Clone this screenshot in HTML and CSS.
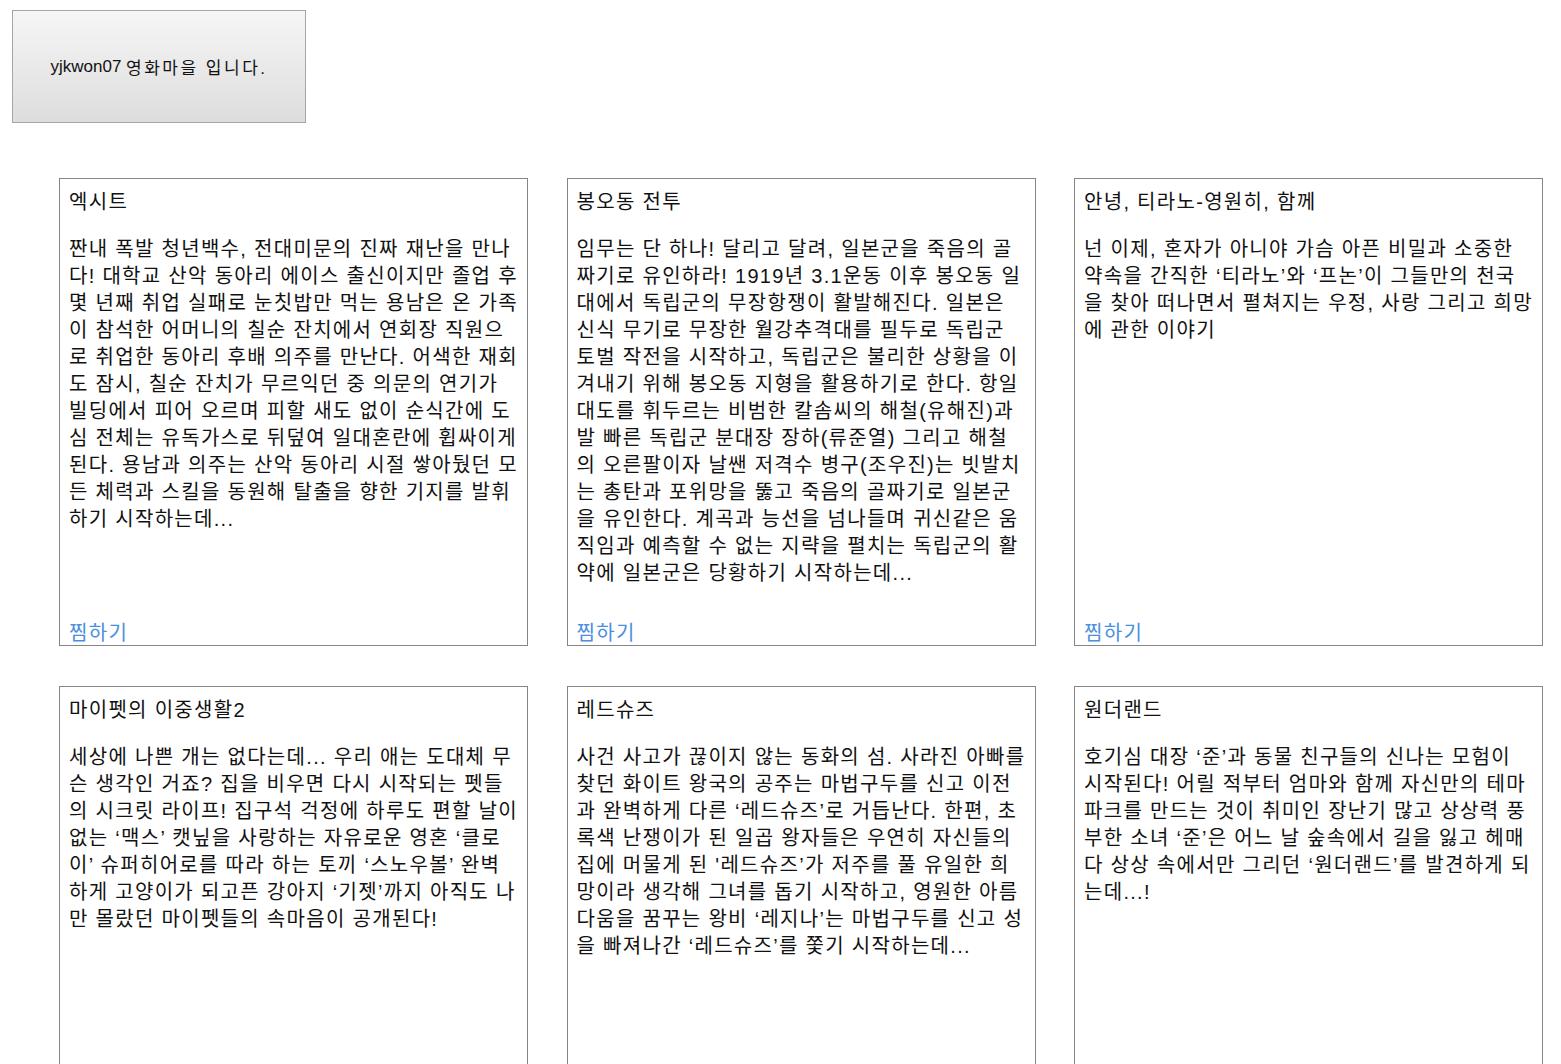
FILE: index.html
```html
<!DOCTYPE html>
<html lang="ko">
<head>
<meta charset="utf-8">
<title>yjkwon07 영화마을</title>
<link rel="stylesheet" href="styles.css">
</head>
<body>
<header class="site-header">
  <div class="brand">yjkwon07 <span class="brand-ko">영화마을 입니다.</span></div>
</header>
<main class="movie-grid">
  <article class="movie-card">
    <h2 class="movie-title">엑시트</h2>
    <p class="movie-desc">짠내 폭발 청년백수, 전대미문의 진짜 재난을 만나다! 대학교 산악 동아리 에이스 출신이지만 졸업 후 몇 년째 취업 실패로 눈칫밥만 먹는 용남은 온 가족이 참석한 어머니의 칠순 잔치에서 연회장 직원으로 취업한 동아리 후배 의주를 만난다. 어색한 재회도 잠시, 칠순 잔치가 무르익던 중 의문의 연기가 빌딩에서 피어 오르며 피할 새도 없이 순식간에 도심 전체는 유독가스로 뒤덮여 일대혼란에 휩싸이게 된다. 용남과 의주는 산악 동아리 시절 쌓아뒀던 모든 체력과 스킬을 동원해 탈출을 향한 기지를 발휘하기 시작하는데...</p>
    <a class="wish" href="#">찜하기</a>
  </article>
  <article class="movie-card">
    <h2 class="movie-title">봉오동 전투</h2>
    <p class="movie-desc">임무는 단 하나! 달리고 달려, 일본군을 죽음의 골짜기로 유인하라! 1919년 3.1운동 이후 봉오동 일대에서 독립군의 무장항쟁이 활발해진다. 일본은 신식 무기로 무장한 월강추격대를 필두로 독립군 토벌 작전을 시작하고, 독립군은 불리한 상황을 이겨내기 위해 봉오동 지형을 활용하기로 한다. 항일대도를 휘두르는 비범한 칼솜씨의 해철(유해진)과 발 빠른 독립군 분대장 장하(류준열) 그리고 해철의 오른팔이자 날쌘 저격수 병구(조우진)는 빗발치는 총탄과 포위망을 뚫고 죽음의 골짜기로 일본군을 유인한다. 계곡과 능선을 넘나들며 귀신같은 움직임과 예측할 수 없는 지략을 펼치는 독립군의 활약에 일본군은 당황하기 시작하는데...</p>
    <a class="wish" href="#">찜하기</a>
  </article>
  <article class="movie-card">
    <h2 class="movie-title">안녕, 티라노-영원히, 함께</h2>
    <p class="movie-desc">넌 이제, 혼자가 아니야 가슴 아픈 비밀과 소중한 약속을 간직한 ‘티라노’와 ‘프논’이 그들만의 천국을 찾아 떠나면서 펼쳐지는 우정, 사랑 그리고 희망에 관한 이야기</p>
    <a class="wish" href="#">찜하기</a>
  </article>
  <article class="movie-card">
    <h2 class="movie-title">마이펫의 이중생활2</h2>
    <p class="movie-desc">세상에 나쁜 개는 없다는데... 우리 애는 도대체 무슨 생각인 거죠? 집을 비우면 다시 시작되는 펫들의 시크릿 라이프! 집구석 걱정에 하루도 편할 날이 없는 ‘맥스’ 캣닢을 사랑하는 자유로운 영혼 ‘클로이’ 슈퍼히어로를 따라 하는 토끼 ‘스노우볼’ 완벽하게 고양이가 되고픈 강아지 ‘기젯’까지 아직도 나만 몰랐던 마이펫들의 속마음이 공개된다!</p>
    <a class="wish" href="#">찜하기</a>
  </article>
  <article class="movie-card">
    <h2 class="movie-title">레드슈즈</h2>
    <p class="movie-desc">사건 사고가 끊이지 않는 동화의 섬. 사라진 아빠를 찾던 화이트 왕국의 공주는 마법구두를 신고 이전과 완벽하게 다른 ‘레드슈즈’로 거듭난다. 한편, 초록색 난쟁이가 된 일곱 왕자들은 우연히 자신들의 집에 머물게 된 '레드슈즈’가 저주를 풀 유일한 희망이라 생각해 그녀를 돕기 시작하고, 영원한 아름다움을 꿈꾸는 왕비 ‘레지나’는 마법구두를 신고 성을 빠져나간 ‘레드슈즈’를 쫓기 시작하는데...</p>
    <a class="wish" href="#">찜하기</a>
  </article>
  <article class="movie-card">
    <h2 class="movie-title">원더랜드</h2>
    <p class="movie-desc">호기심 대장 ‘준’과 동물 친구들의 신나는 모험이 시작된다! 어릴 적부터 엄마와 함께 자신만의 테마파크를 만드는 것이 취미인 장난기 많고 상상력 풍부한 소녀 ‘준’은 어느 날 숲속에서 길을 잃고 헤매다 상상 속에서만 그리던 ‘원더랜드’를 발견하게 되는데...!</p>
    <a class="wish" href="#">찜하기</a>
  </article>
</main>
</body>
</html>
```

FILE: styles.css
```css
html, body {
  margin: 0;
  padding: 0;
  background: #ffffff;
}

body {
  font-family: "Liberation Sans", "Noto Sans CJK KR", sans-serif;
  color: #111111;
}

.site-header {
  padding: 10px 0 0 12px;
}

.brand {
  box-sizing: border-box;
  width: 294px;
  height: 113px;
  display: flex;
  align-items: center;
  justify-content: center;
  border: 1px solid #a6a6a6;
  background: linear-gradient(to bottom, #f6f6f6 0%, #dddddd 100%);
  font-size: 17px;
  color: #111111;
  white-space: pre;
}

.brand-ko {
  letter-spacing: 2.5px;
}

.movie-grid {
  display: grid;
  grid-template-columns: repeat(3, 469px);
  column-gap: 38.5px;
  row-gap: 40px;
  margin-top: 55px;
  padding-left: 59px;
}

.movie-card {
  box-sizing: border-box;
  width: 469px;
  height: 468px;
  border: 1px solid #868686;
  padding: 10px 9px 0 9px;
  display: flex;
  flex-direction: column;
  font-size: 20px;
  line-height: 27px;
  letter-spacing: 1.3px;
}

.movie-title {
  margin: 0;
  font-size: 20px;
  font-weight: normal;
  line-height: 27px;
}

.movie-desc {
  margin: 20px 0 0 0;
  line-height: 27px;
}

.wish {
  margin-top: auto;
  color: #4a8fe0;
  text-decoration: none;
  line-height: 23px;
}
```
